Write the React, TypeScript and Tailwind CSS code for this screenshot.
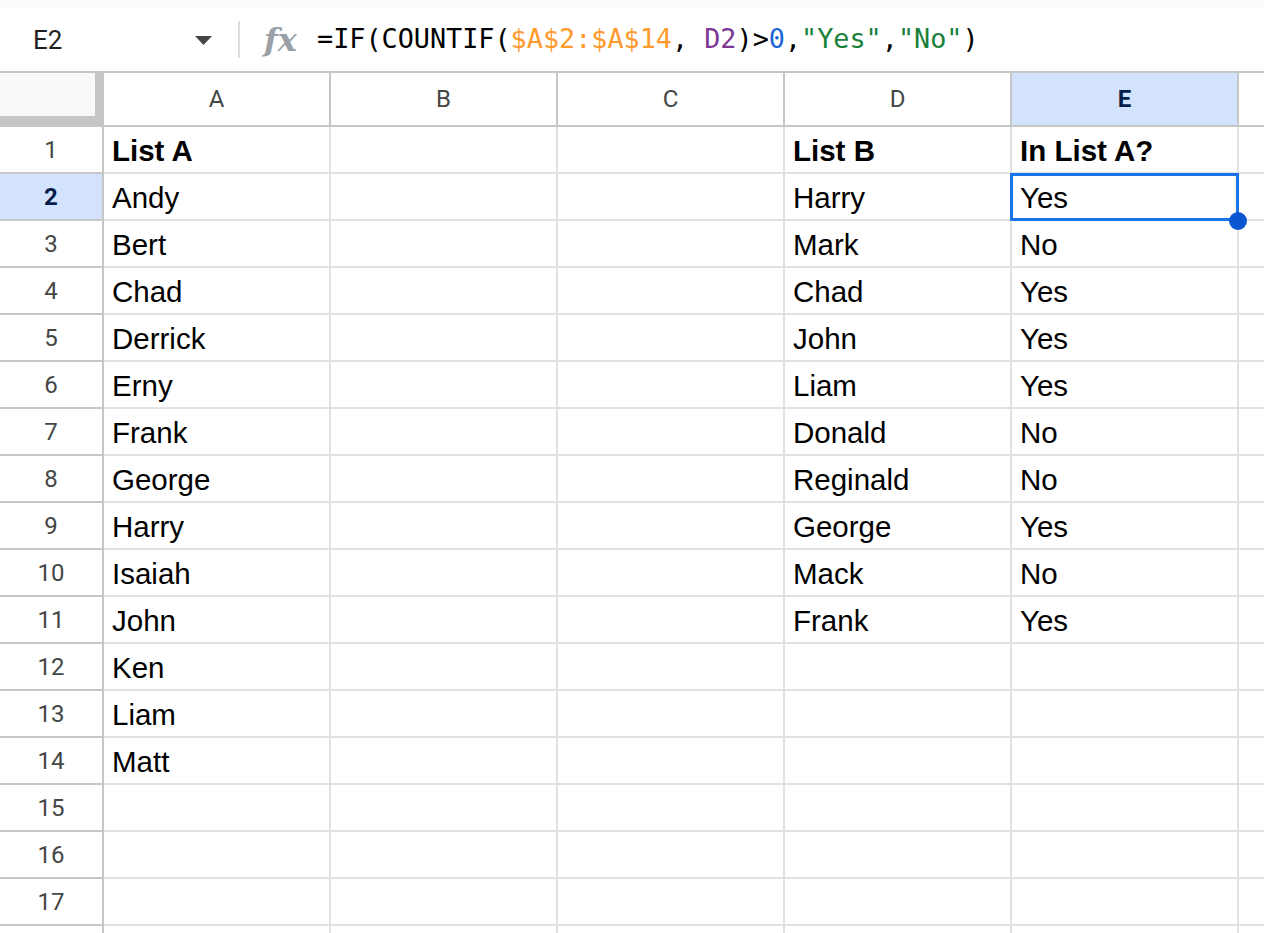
import React from "react";

const colA = ["List A", "Andy", "Bert", "Chad", "Derrick", "Erny", "Frank", "George", "Harry", "Isaiah", "John", "Ken", "Liam", "Matt"];
const colD = ["List B", "Harry", "Mark", "Chad", "John", "Liam", "Donald", "Reginald", "George", "Mack", "Frank"];
const colE = ["In List A?", "Yes", "No", "Yes", "Yes", "Yes", "No", "No", "Yes", "No", "Yes"];

const cols = ["A", "B", "C", "D", "E", "F"];
const ROWS = 18;

function cellValue(col: string, r: number): string {
  if (col === "A") return colA[r] ?? "";
  if (col === "D") return colD[r] ?? "";
  if (col === "E") return colE[r] ?? "";
  return "";
}

export default function App() {
  return (
    <div className="h-[933px] w-[1264px] overflow-hidden bg-white" style={{ fontFamily: "Roboto, 'Liberation Sans', sans-serif" }}>
      {/* top strip */}
      <div className="h-[8px] bg-[#f9fbfd]" />
      {/* formula bar */}
      <div className="flex h-[65px] items-center border-b-2 border-[#c4c7c5] bg-white">
        <span className="ml-[33px] w-[162px] text-[26px] leading-none text-[#1f1f1f]" style={{ fontFamily: "Roboto, sans-serif" }}>
          E2
        </span>
        <svg width="17" height="9" viewBox="0 0 17 9" className="mt-[2px]">
          <path d="M0 0 L17 0 L8.5 9 Z" fill="#444746" />
        </svg>
        <div className="ml-[26px] h-[37px] w-[2px] bg-[#dadce0]" />
        <span
          className="ml-[24px] w-[34px] text-[32px] italic leading-none text-[#9aa0a6]"
          style={{ fontFamily: "'DejaVu Serif', 'Liberation Serif', serif", fontWeight: 700 }}
        >
          fx
        </span>
        <span
          className="ml-[19px] whitespace-pre text-[26.8px] leading-none text-[#000]"
          style={{ fontFamily: "'DejaVu Sans Mono', 'Liberation Mono', monospace" }}
        >
          =IF(COUNTIF(<span className="text-[#ff9a2e]">$A$2:$A$14</span>, <span className="text-[#7e3794]">D2</span>)&gt;
          <span className="text-[#1a66d6]">0</span>,<span className="text-[#188038]">"Yes"</span>,
          <span className="text-[#188038]">"No"</span>)
        </span>
      </div>

      {/* column header row */}
      <div className="flex h-[54px]">
        <div className="flex h-[54px] w-[104px] shrink-0 bg-[#c4c7c5]">
          <div className="h-[43px] w-[95px] bg-[#f8f9fa]" />
        </div>
        {cols.map((c) => {
          const sel = c === "E";
          return (
            <div
              key={c}
              className={
                "flex h-[54px] w-[227px] shrink-0 items-center justify-center border-r-2 border-b-2 border-[#c4c7c5] text-[24px] " +
                (sel ? "bg-[#d3e3fd] font-bold text-[#041e49]" : "bg-white text-[#444746]")
              }
            >
              {c === "F" ? "" : c}
            </div>
          );
        })}
      </div>

      {/* rows */}
      {Array.from({ length: ROWS }).map((_, r) => {
        const rowNum = r + 1;
        const selRow = rowNum === 2;
        return (
          <div key={r} className="flex h-[47px]">
            <div
              className={
                "flex h-[47px] w-[104px] shrink-0 items-center justify-center border-r-2 border-b-2 border-[#c4c7c5] text-[24px] " +
                (selRow ? "bg-[#d3e3fd] font-bold text-[#041e49]" : "bg-white text-[#444746]")
              }
            >
              {rowNum < 18 ? rowNum : ""}
            </div>
            {cols.map((c) => {
              const v = cellValue(c, r);
              const bold = r === 0;
              const selected = c === "E" && rowNum === 2;
              return (
                <div
                  key={c}
                  className={
                    "flex h-[47px] w-[227px] shrink-0 items-end border-r-2 border-b-2 border-[#e1e1e1] pb-[4px] pl-[8px] text-[29.5px] leading-[34px] text-black " +
                    (bold ? "font-bold " : "") +
                    (selected ? "relative z-10" : "")
                  }
                  style={{ fontFamily: "'Liberation Sans', Arial, sans-serif" }}
                >
                  {v}
                  {selected && (
                    <>
                      <div className="pointer-events-none absolute -left-[2px] -top-[1px] -right-[2px] -bottom-[2px] border-[3px] border-[#1a73e8]" />
                      <div className="absolute -bottom-[11px] -right-[10px] h-[18px] w-[18px] rounded-full bg-[#0b57d0]" />
                    </>
                  )}
                </div>
              );
            })}
          </div>
        );
      })}
    </div>
  );
}
